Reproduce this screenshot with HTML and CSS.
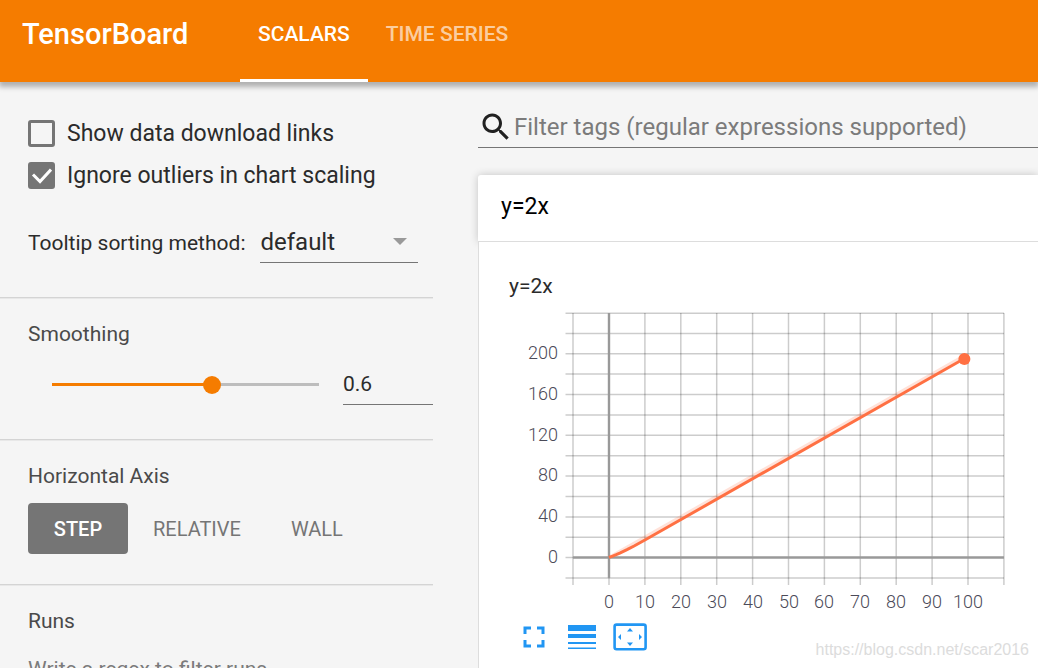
FILE: index.html
```html
<!DOCTYPE html>
<html lang="en">

<head>
    <meta charset="UTF-8">
    <meta name="viewport" content="width=device-width, initial-scale=1.0">
    <title>TensorBoard</title>
    <link rel="stylesheet" href="styles.css">
</head>

<body>
    <header class="toolbar">
        <h1 class="brand">TensorBoard</h1>
        <nav class="tabs">
            <a class="tab selected" href="#scalars">SCALARS</a>
            <a class="tab" href="#timeseries">TIME SERIES</a>
        </nav>
    </header>

    <div class="content">
        <aside class="sidebar">
            <section class="options">
                <label class="check"><input type="checkbox">Show data download links</label>
                <label class="check"><input type="checkbox" checked>Ignore outliers in chart scaling</label>
                <div class="tooltip-sort">
                    <label for="sorting">Tooltip sorting method:</label>
                    <select id="sorting">
                        <option>default</option>
                        <option>descending</option>
                        <option>ascending</option>
                        <option>nearest</option>
                    </select>
                </div>
            </section>

            <section class="smoothing">
                <h2><label for="smooth">Smoothing</label></h2>
                <div class="slider-row">
                    <input id="smooth" class="slider" type="range" min="0" max="1" step="0.1" value="0.6">
                    <input class="slider-value" type="text" value="0.6" aria-label="Smoothing value">
                </div>
            </section>

            <section class="axis">
                <h2>Horizontal Axis</h2>
                <div class="axis-buttons">
                    <button type="button" class="selected">STEP</button>
                    <button type="button">RELATIVE</button>
                    <button type="button">WALL</button>
                </div>
            </section>

            <section class="runs">
                <h2><label for="runs">Runs</label></h2>
                <input id="runs" class="runs-filter" type="text" placeholder="Write a regex to filter runs">
            </section>
        </aside>

        <main class="main">
            <div class="tag-filter">
                <svg width="36" height="36" viewBox="0 0 24 24" aria-hidden="true">
                    <path fill="#212121" d="M15.5 14h-.79l-.28-.27C15.41 12.59 16 11.11 16 9.5 16 5.91 13.09 3 9.5 3S3 5.91 3 9.5 5.91 16 9.5 16c1.61 0 3.09-.59 4.23-1.57l.27.28v.79l5 4.99L20.49 19l-4.99-5zm-6 0C7.01 14 5 11.99 5 9.5S7.01 5 9.5 5 14 7.01 14 9.5 11.99 14 9.5 14z"/>
                </svg>
                <input type="text" placeholder="Filter tags (regular expressions supported)" aria-label="Filter tags">
            </div>

            <section class="card">
                <h2 class="card-header">y=2x</h2>
                <div class="card-body">
                    <h3 class="chart-title">y=2x</h3>
                    <svg class="chart" width="505" height="310" viewBox="0 0 505 310" role="img" aria-label="y=2x">
                        <!-- grid -->
                        <path class="grid" d="M64 7V279M135.9 7V279M171.8 7V279M207.7 7V279M243.6 7V279M279.5 7V279M315.4 7V279M351.3 7V279M387.2 7V279M423.1 7V279M459 7V279M494.9 7V279M100 272V279"/>
                        <path class="grid" d="M56.5 7.2H495M56.5 27.4H495M56.5 47.7H495M56.5 68.1H495M56.5 88.5H495M56.5 108.9H495M56.5 129.3H495M56.5 149.7H495M56.5 170.1H495M56.5 190.5H495M56.5 210.9H495M56.5 231.3H495M56.5 251.6H64M56.5 272H495"/>
                        <path class="zero" d="M100 7V272M64 251.5H495"/>
                        <!-- raw and smoothed values -->
                        <path class="raw" d="M100 251.4L455.4 49.5"/>
                        <path class="line" d="M100 251.4L103.6 250.1L107.2 248.7L110.8 247.1L114.4 245.4L118 243.7L125.1 240L135.9 234L455.4 52.5"/>
                        <circle cx="455.4" cy="53" r="6" fill="#ff7043"/>
                        <g class="labels" text-anchor="end">
                            <text x="49" y="53">200</text>
                            <text x="49" y="94">160</text>
                            <text x="49" y="135">120</text>
                            <text x="49" y="175">80</text>
                            <text x="49" y="216">40</text>
                            <text x="49" y="257">0</text>
                        </g>
                        <g class="labels" text-anchor="middle">
                            <text x="100" y="302">0</text>
                            <text x="136" y="302">10</text>
                            <text x="172" y="302">20</text>
                            <text x="208" y="302">30</text>
                            <text x="244" y="302">40</text>
                            <text x="280" y="302">50</text>
                            <text x="315" y="302">60</text>
                            <text x="351" y="302">70</text>
                            <text x="387" y="302">80</text>
                            <text x="423" y="302">90</text>
                            <text x="459" y="302">100</text>
                        </g>
                    </svg>
                    <div class="chart-actions">
                        <button type="button" aria-label="Toggle fullscreen">
                            <svg width="36" height="36" viewBox="0 0 24 24">
                                <path d="M7 14H5v5h5v-2H7v-3zm-2-4h2V7h3V5H5v5zm12 7h-3v2h5v-5h-2v3zM14 5v2h3v3h2V5h-5z"/>
                            </svg>
                        </button>
                        <button type="button" aria-label="Toggle log scale">
                            <svg width="36" height="36" viewBox="0 0 36 36">
                                <path d="M4 6h28v6H4zM4 15h28v4H4zM4 23h28v2H4zM4 28.5h28v1.5H4z"/>
                            </svg>
                        </button>
                        <button type="button" aria-label="Fit domain to data">
                            <svg width="36" height="36" viewBox="0 0 36 36">
                                <rect x="2.6" y="5.6" width="31" height="24.6" rx="2" fill="none" stroke="#2196f3" stroke-width="2.6"/>
                                <path d="M18 9l3 3.5h-6zM18 27l3-3.5h-6zM6 18l3-3v6zM30 18l-3-3v6z"/>
                            </svg>
                        </button>
                    </div>
                </div>
            </section>
        </main>
    </div>

    <div class="watermark">https://blog.csdn.net/scar2016</div>
</body>

</html>
```
FILE: styles.css
```css
* {
    box-sizing: border-box;
    margin: 0;
    padding: 0;
}

body {
    display: flex;
    flex-direction: column;
    height: 100vh;
    overflow: hidden;
    background: #f5f5f5;
    color: #2b2b2b;
    font-family: Roboto, sans-serif;
    font-size: 21px;
    line-height: 24px;
}

h2,
h3 {
    font-size: 21px;
    font-weight: 400;
}

input,
select,
button {
    border: 0;
    border-radius: 0;
    outline: 0;
    background: none;
    color: inherit;
    font: inherit;
}

.toolbar {
    position: relative;
    z-index: 1;
    flex: none;
    display: flex;
    height: 82px;
    padding-left: 22px;
    background: #f57c00;
    color: #fff;
    box-shadow: 0 4px 5px 1px rgba(0, 0, 0, .28);
}

.brand {
    width: 218px;
    padding-top: 22px;
    font-size: 29px;
    font-weight: 500;
}

.tabs {
    display: flex;
}

.tab {
    padding: 22px 18px 0;
    color: #fff;
    font-weight: 500;
    text-decoration: none;
    border-bottom: 3px solid transparent;
}

.tab:not(.selected) {
    color: rgba(255, 255, 255, .65);
}

.tab.selected {
    border-color: #fff;
}

.content {
    flex: 1;
    display: flex;
    gap: 45px;
    min-height: 0;
}

/* sidebar */

.sidebar {
    flex: none;
    width: 433px;
}

.sidebar section {
    padding-left: 28px;
    border-bottom: 1px solid #d4d4d4;
    box-shadow: 0 1px 0 #e8e8e8;
}

.sidebar h2 {
    color: #4a4a4a;
}

.sidebar .options {
    padding-top: 30px;
    padding-bottom: 34px;
}

.check {
    display: flex;
    align-items: center;
    gap: 12px;
    height: 42px;
    font-size: 23px;
    line-height: 27px;
}

.check input {
    appearance: none;
    width: 27px;
    height: 27px;
    border: 3px solid #757575;
    border-radius: 3px;
}

.check input:checked {
    background: #757575 url("data:image/svg+xml,%3Csvg xmlns='http://www.w3.org/2000/svg' viewBox='0 0 21 21'%3E%3Cpath d='M2 9.5l7 7L20 4.5' fill='none' stroke='%23fff' stroke-width='3'/%3E%3C/svg%3E") center / 21px 21px no-repeat;
}

.tooltip-sort {
    display: flex;
    align-items: baseline;
    gap: 15px;
    margin-top: 25px;
}

.tooltip-sort select {
    appearance: none;
    width: 158px;
    height: 42px;
    border-bottom: 1px solid #757575;
    font-size: 24px;
    background: url("data:image/svg+xml,%3Csvg xmlns='http://www.w3.org/2000/svg' viewBox='0 0 14 7'%3E%3Cpath d='M0 0h14l-7 7z' fill='%23999'/%3E%3C/svg%3E") right 11px center / 14px 7px no-repeat;
}

.sidebar .smoothing {
    padding-top: 24px;
    padding-bottom: 34px;
}

.slider-row {
    display: flex;
    justify-content: space-between;
    align-items: center;
    margin-top: 18px;
}

/* the track is inset by half a thumb on each side */
.slider {
    appearance: none;
    width: 285px;
    height: 18px;
    margin-left: 15px;
    background: linear-gradient(90deg, #f57c00 60%, #bdbdbd 60%) center / 267px 3px no-repeat;
}

.slider::-webkit-slider-thumb {
    appearance: none;
    width: 18px;
    height: 18px;
    border-radius: 50%;
    background: #f57c00;
}

.slider-value {
    width: 90px;
    height: 41px;
    border-bottom: 1px solid #757575;
}

.sidebar .axis {
    padding-top: 24px;
    padding-bottom: 30px;
}

.axis-buttons {
    display: flex;
    margin-top: 15px;
}

.axis-buttons button {
    min-width: 100px;
    height: 51px;
    padding: 0 25px;
    border-radius: 4px;
    color: #757575;
    font-size: 20px;
}

.axis-buttons .selected {
    background: #757575;
    color: #fff;
    font-weight: 500;
}

.sidebar .runs {
    padding-top: 24px;
}

.runs-filter {
    width: 100%;
    height: 36px;
    margin-top: 18px;
}

::placeholder {
    color: #7b7b7b;
    opacity: 1;
}

/* main pane */

.main {
    flex: 1;
    min-width: 0;
    padding-top: 24px;
}

.tag-filter {
    display: flex;
    align-items: center;
    height: 42px;
    border-bottom: 1px solid #757575;
}

.tag-filter svg {
    flex: none;
}

.tag-filter input {
    flex: 1;
    font-size: 24px;
}

.card {
    margin-top: 27px;
}

.card-header {
    height: 67px;
    padding: 20px 23px;
    border-bottom: 1px solid #ddd;
    border-radius: 3px 0 0 0;
    background: #fff;
    color: #000;
    font-size: 23px;
    box-shadow: 0 0 8px rgba(0, 0, 0, .2);
}

.card-body {
    position: relative;
    padding: 32px 0 24px 30px;
    border-left: 1px solid #ddd;
    background: #fff;
}

.chart {
    display: block;
    margin-top: 8px;
}

.grid {
    fill: none;
    stroke: #000;
    stroke-opacity: .2;
    stroke-width: 1.5;
}

.zero {
    fill: none;
    stroke: #999;
    stroke-width: 2.4;
}

.raw {
    stroke: #ff7043;
    stroke-opacity: .2;
    stroke-width: 3;
}

.line {
    fill: none;
    stroke: #ff7043;
    stroke-width: 3;
}

.labels {
    fill: #4b4a58;
    font-size: 18px;
    font-weight: 300;
}

.chart-actions {
    display: flex;
    gap: 12px;
    margin: 3px 0 0 7px;
}

.chart-actions svg {
    display: block;
    fill: #2196f3;
}

.watermark {
    position: absolute;
    right: 9px;
    bottom: 6px;
    color: #dcdcdc;
    font-family: "Liberation Sans", Arial, sans-serif;
    font-size: 16px;
}
```
